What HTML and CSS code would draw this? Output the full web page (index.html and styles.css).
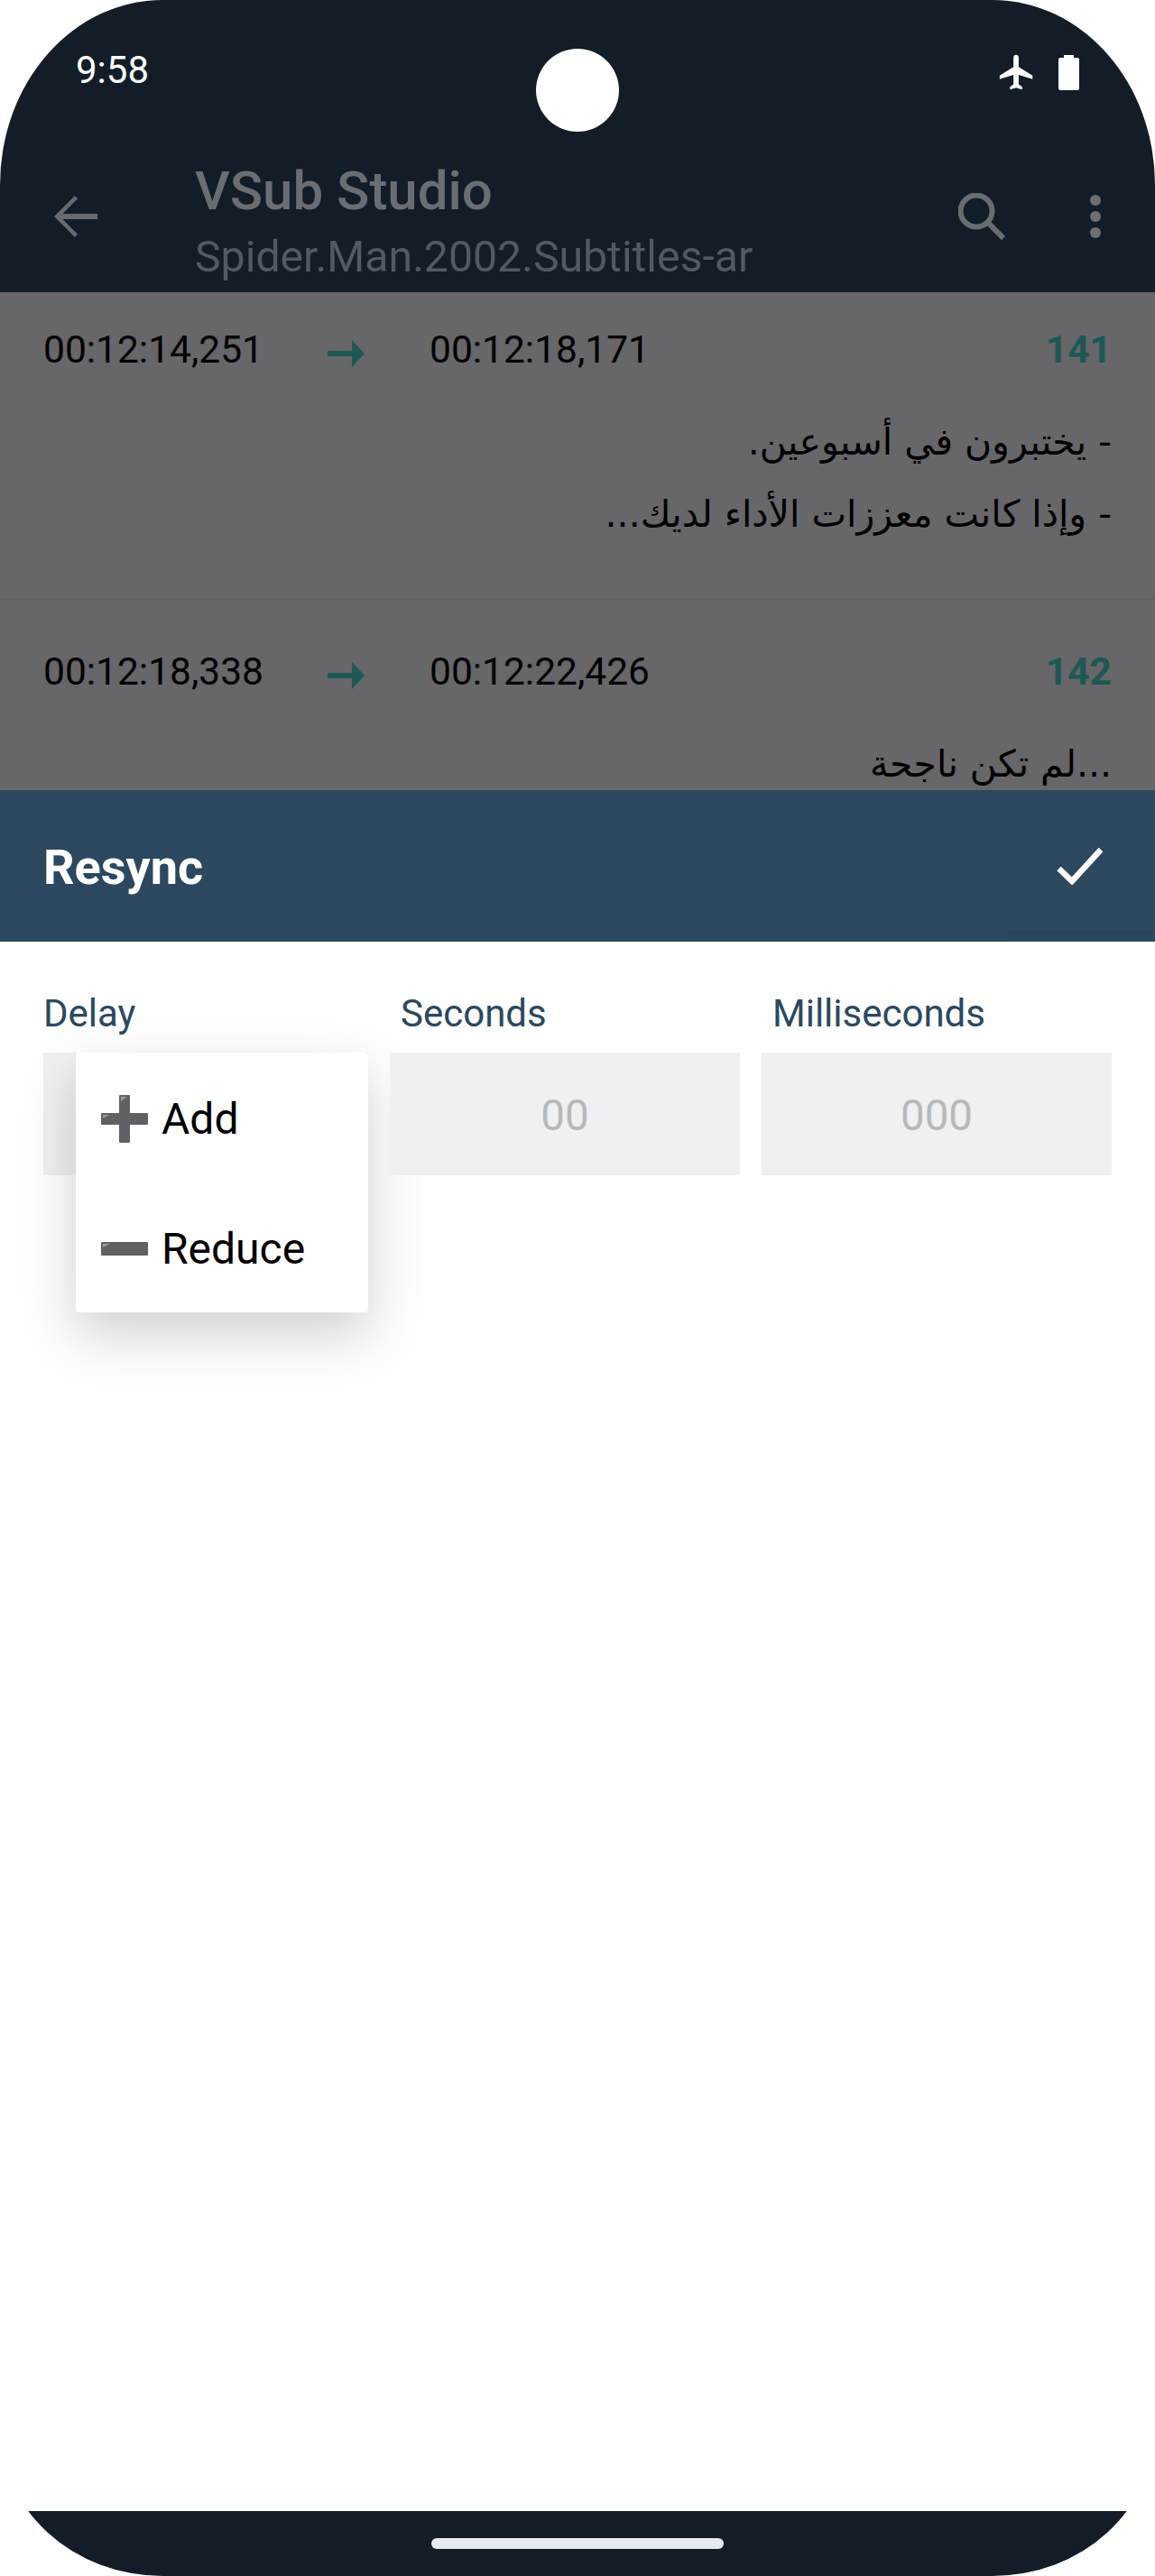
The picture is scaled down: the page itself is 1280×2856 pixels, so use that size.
FILE: index.html
```html
<!DOCTYPE html>
<html lang="en">
<head>
  <meta charset="UTF-8">
  <meta name="viewport" content="width=device-width, initial-scale=1.0">
  <title>VSub Studio - Resync</title>
  <link rel="stylesheet" href="styles.css">
</head>
<body>

<div class="phone">
  <div class="camera"></div>

  <header class="app-header">
    <div class="status-bar">
      <span class="clock">9:58</span>
      <div class="status-icons">
        <svg class="icon-plane" viewBox="0 0 24 24"><path d="M21 16v-2l-8-5V3.5c0-.83-.67-1.5-1.5-1.5S10 2.67 10 3.5V9l-8 5v2l8-2.5V19l-2 1.5V22l3.5-1 3.5 1v-1.5L13 19v-5.5l8 2.5z"/></svg>
        <svg class="icon-battery" viewBox="0 0 23 39"><path d="M6 0h11v3h4a2 2 0 0 1 2 2v32a2 2 0 0 1-2 2H2a2 2 0 0 1-2-2V5a2 2 0 0 1 2-2h4z"/></svg>
      </div>
    </div>
    <div class="toolbar">
      <svg class="icon-back" viewBox="0 0 48 46"><path d="M48 20H9.5L26 3.2 23 0 0 23l23 23 3-3.2L9.5 26H48z"/></svg>
      <div class="toolbar-title">
        <h1>VSub Studio</h1>
        <p>Spider.Man.2002.Subtitles-ar</p>
      </div>
      <svg class="icon-search" viewBox="0 0 53 52"><circle cx="20" cy="20" r="17.5"/><path d="M32 32l18 18"/></svg>
      <div class="icon-more"><i></i><i></i><i></i></div>
    </div>
  </header>

  <section class="subtitle-list">
    <div class="cue">
      <div class="cue-times">
        <span class="cue-start">00:12:14,251</span>
        <svg class="cue-arrow" viewBox="0 0 41 30"><path d="M0 12h27V0l14 15-14 15V18H0z"/></svg>
        <span>00:12:18,171</span>
        <b class="cue-num">141</b>
      </div>
      <div class="cue-text" dir="rtl" lang="ar">
        <div>- يختبرون في أسبوعين.</div>
        <div>- وإذا كانت معززات الأداء لديك...</div>
      </div>
    </div>
    <div class="cue">
      <div class="cue-times">
        <span class="cue-start">00:12:18,338</span>
        <svg class="cue-arrow" viewBox="0 0 41 30"><path d="M0 12h27V0l14 15-14 15V18H0z"/></svg>
        <span>00:12:22,426</span>
        <b class="cue-num">142</b>
      </div>
      <div class="cue-text" dir="rtl" lang="ar">
        <div>...لم تكن ناجحة</div>
      </div>
    </div>
  </section>

  <section class="sheet">
    <div class="sheet-head">
      <h2>Resync</h2>
      <div class="confirm">
        <svg viewBox="0 0 52 42"><path d="M2.5 24L17 38 49 3"/></svg>
      </div>
    </div>
    <div class="sheet-body">
      <div class="field field-delay">
        <label>Delay</label>
        <div class="field-box"></div>
        <ul class="menu">
          <li>
            <svg class="menu-icon" viewBox="0 0 52 53">
              <path class="glyph" d="M20 1a1 1 0 0 1 1-1h10a1 1 0 0 1 1 1v19h19a1 1 0 0 1 1 1v11a1 1 0 0 1-1 1H32v19a1 1 0 0 1-1 1H21a1 1 0 0 1-1-1V33H1a1 1 0 0 1-1-1V21a1 1 0 0 1 1-1h19z"/>
              <path class="shine" d="M22 2h7l-7 5zM2 22h7l-7 4z"/>
            </svg>
            <span>Add</span>
          </li>
          <li>
            <svg class="menu-icon" viewBox="0 0 52 15">
              <rect class="glyph" width="52" height="15" rx="1"/>
              <path class="shine" d="M2 2h8l-8 4z"/>
            </svg>
            <span>Reduce</span>
          </li>
        </ul>
      </div>
      <div class="field">
        <label>Seconds</label>
        <div class="field-box">00</div>
      </div>
      <div class="field">
        <label>Milliseconds</label>
        <div class="field-box">000</div>
      </div>
    </div>
  </section>

  <footer class="nav-bar"><div class="home-pill"></div></footer>
</div>

</body>
</html>
```

FILE: styles.css
```css
body {
  margin: 0;
  background-color: #fff;
  font-family: 'Roboto', 'DejaVu Sans', sans-serif;
}

h1, h2, p, ul {
  margin: 0;
  padding: 0;
}

.phone {
  position: relative;
  width: 1280px;
  height: 2856px;
  display: flex;
  flex-direction: column;
  overflow: hidden;
  border-radius: 180px 180px 180px 180px / 205px 205px 165px 165px;
  background-color: #fefefe;
}

.camera {
  position: absolute;
  top: 54px;
  left: 594px;
  width: 92px;
  height: 92px;
  border-radius: 50%;
  background-color: #fff;
}

/* Top bars */
.app-header {
  height: 324px;
  flex-shrink: 0;
  background-color: #121d27;
}

.status-bar {
  height: 156px;
  box-sizing: border-box;
  padding: 54px 84px 0 84px;
  display: flex;
  justify-content: space-between;
  align-items: flex-start;
}

.clock {
  color: #fff;
  font-size: 42px;
  line-height: 47px;
}

.status-icons {
  display: flex;
  align-items: center;
  gap: 23px;
  margin-top: 3px;
}

.icon-plane {
  width: 46px;
  height: 46px;
  fill: #fff;
}

.icon-battery {
  width: 23px;
  height: 39px;
  fill: #fff;
}

.toolbar {
  display: flex;
  align-items: center;
  padding: 0 60px;
  height: 168px;
}

.icon-back {
  width: 48px;
  height: 46px;
  fill: #676a6f;
}

.toolbar-title {
  flex: 1;
  margin-left: 108px;
  margin-top: 12px;
}

.toolbar-title h1 {
  color: #6a6d72;
  font-size: 60px;
  font-weight: 500;
  line-height: 66px;
}

.toolbar-title p {
  color: #4f5a63;
  font-size: 48.2px;
  line-height: 56px;
  margin-top: 12px;
}

.icon-search {
  width: 53px;
  height: 52px;
  fill: none;
  stroke: #6a6d6f;
  stroke-width: 6;
}

.icon-more {
  width: 12px;
  margin-left: 93px;
  display: flex;
  flex-direction: column;
  gap: 6px;
}

.icon-more i {
  display: block;
  width: 12px;
  height: 12px;
  border-radius: 50%;
  background-color: #6d6e72;
}

/* Dimmed subtitle rows */
.subtitle-list {
  height: 552px;
  flex-shrink: 0;
  overflow: hidden;
  background-color: #676668;
}

.cue {
  height: 341px;
  box-sizing: border-box;
  padding: 56px 48px 0 48px;
  border-bottom: 2px solid #606061;
}

.cue:first-child {
  padding-top: 40px;
}

.cue:last-child {
  border-bottom: none;
}

.cue-times {
  display: flex;
  align-items: center;
  color: #000;
  font-size: 42.5px;
  line-height: 48px;
}

.cue-start {
  width: 315px;
}

.cue-arrow {
  width: 41px;
  height: 30px;
  fill: #1d5855;
  margin-right: 72px;
  margin-top: 8px;
}

.cue-num {
  margin-left: auto;
  color: #1d5855;
  font-size: 42.5px;
  font-weight: 700;
}

.cue-text {
  margin-top: 38px;
  color: #000;
  font-family: 'DejaVu Sans', sans-serif;
  font-size: 41px;
  line-height: 80px;
}

/* Resync sheet */
.sheet {
  flex: 1;
  display: flex;
  flex-direction: column;
}

.sheet-head {
  height: 168px;
  display: flex;
  align-items: center;
  justify-content: space-between;
  background-color: #2b485f;
}

.sheet-head h2 {
  margin-left: 48px;
  margin-top: 3px;
  color: #fff;
  font-size: 54px;
  font-weight: 700;
}

.confirm {
  align-self: flex-start;
  width: 170px;
  height: 156px;
  display: flex;
  align-items: center;
  justify-content: center;
  box-shadow: 0 6px 8px -3px rgba(0, 0, 0, 0.07);
}

.confirm svg {
  width: 52px;
  height: 42px;
  fill: none;
  stroke: #fff;
  stroke-width: 6.5;
  margin-top: 12px;
  margin-left: 4px;
}

.sheet-body {
  display: grid;
  grid-template-columns: 360px 388px 388px;
  gap: 24px;
  padding: 55px 48px 0 48px;
}

.field {
  position: relative;
}

.field label {
  display: block;
  padding-left: 12px;
  color: #2b4860;
  font-size: 42px;
  line-height: 50px;
  margin-bottom: 18px;
}

.field-delay label {
  padding-left: 0;
}

.field-box {
  height: 136px;
  background-color: #eff0f2;
  color: #b7b8ba;
  font-size: 47.5px;
  line-height: 141px;
  text-align: center;
}

/* Delay dropdown */
.menu {
  position: absolute;
  top: 68px;
  left: 36px;
  width: 324px;
  height: 288px;
  list-style: none;
  background-color: #fff;
  border-radius: 4px;
  box-shadow: 0 24px 60px rgba(0, 0, 0, 0.18);
}

.menu li {
  height: 144px;
  box-sizing: border-box;
  padding-top: 3px;
  padding-left: 28px;
  display: flex;
  align-items: center;
  color: #000;
  font-size: 48px;
}

.menu li span {
  margin-left: 15px;
}

.menu-icon {
  width: 52px;
}

.glyph {
  fill: #5f6164;
}

.shine {
  fill: #9b9b9e;
}

/* Bottom nav */
.nav-bar {
  height: 72px;
  flex-shrink: 0;
  display: flex;
  justify-content: center;
  background-color: #121d27;
}

.home-pill {
  width: 324px;
  height: 12px;
  margin-top: 30px;
  border-radius: 6px;
  background-color: #e6eaee;
}
```
